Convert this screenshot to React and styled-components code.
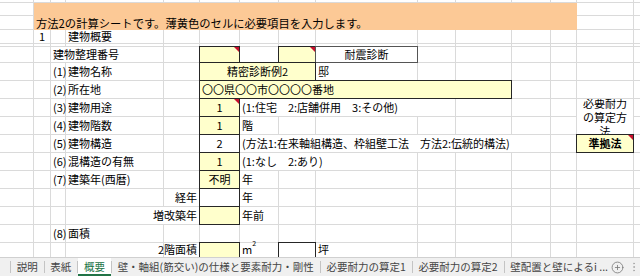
import React from "react";
import styled, { createGlobalStyle, css } from "styled-components";
import { CirclePlus, EllipsisVertical } from "lucide-react";

const GlobalStyle = createGlobalStyle`
  html, body {
    margin: 0;
    padding: 0;
    background: #ffffff;
  }
  body {
    font-family: "Noto Sans CJK JP", "Noto Sans", sans-serif;
  }
`;

// column widths (A..O) and row heights, gridline sits on the last pixel of each
const COLS = [34, 17, 15, 98, 36, 40, 39, 37, 102, 38, 56, 39, 26, 57, 40];
const ROWS = [3, 13, 14, 14, 3, 16, 18, 18, 18, 18, 18, 18, 18, 18, 18, 18, 18, 18];

const Page = styled.div`
  width: 640px;
  height: 276px;
  display: flex;
  flex-direction: column;
  overflow: hidden;
`;

const Sheet = styled.div`
  flex: 0 0 257px;
  overflow: hidden;
  display: grid;
  grid-template-columns: ${COLS.map((c) => `${c}px`).join(" ")};
  grid-template-rows: ${ROWS.map((r) => `${r}px`).join(" ")};
  font-size: 11px;
  color: #000;
`;

const GridCell = styled.div`
  grid-column: ${(p) => p.$c};
  grid-row: ${(p) => p.$r};
  border-right: 1px solid #dadada;
  border-bottom: 1px solid #dadada;
`;

const Cell = styled.div`
  grid-column: ${(p) => p.$col};
  grid-row: ${(p) => p.$row};
  position: relative;
  display: flex;
  align-items: ${(p) => p.$v || "center"};
  justify-content: ${(p) =>
    p.$align === "center" ? "center" : p.$align === "right" ? "flex-end" : "flex-start"};
  padding: 0 2px;
  white-space: nowrap;
  line-height: 13px;
  margin: 0 1px 1px 0;
  background: ${(p) => p.$fill || "transparent"};
  font-weight: ${(p) => (p.$bold ? 700 : 400)};
  ${(p) =>
    p.$box &&
    css`
      margin: -1px 0 0 -1px;
      border: 1px solid ${p.$box};
    `}
  ${(p) =>
    p.$note &&
    css`
      &::after {
        content: "";
        position: absolute;
        top: 0;
        right: 0;
        border-top: 5px solid #c8102e;
        border-left: 5px solid transparent;
      }
    `}
`;

const Title = styled(Cell)`
  align-items: flex-end;
  padding: 0 0 1px 2px;
  font-size: 11.3px;
  line-height: 12px;
  margin: 0;
  background: #fcc996;
`;

const WrapNote = styled.div`
  grid-column: 14;
  grid-row: 9 / 11;
  margin: 0 1px 1px 0;
  overflow: hidden;
  display: flex;
  align-items: center;
  justify-content: center;
  text-align: center;
  line-height: 14px;
  background: #fff;
`;

const TabBar = styled.div`
  flex: 1;
  display: flex;
  align-items: stretch;
  background: #f0f0f0;
  border-top: 1px solid #d0d0d0;
  padding-left: 10px;
  font-size: 10.5px;
  color: #444;
  white-space: nowrap;
`;

const Tab = styled.div`
  display: flex;
  align-items: center;
  padding: 0 6px 1px;
  ${(p) =>
    p.$active &&
    css`
      background: #ffffff;
      color: #217346;
      box-shadow: inset 0 -2px 0 #217346;
    `}
`;

const Sep = styled.span`
  align-self: center;
  width: 1px;
  height: 12px;
  background: #c4c4c4;
`;

const TabTools = styled.div`
  display: flex;
  align-items: center;
  gap: 4px;
  margin-left: -3px;
  color: #777;
  svg:last-child {
    color: #aaa;
  }
`;

const Sup = styled.sup`
  font-size: 7px;
  line-height: 0;
`;

const W = "#ffffff";
const Y = "#ffffcc";
const K = "#262626";

const gridCells = [];
ROWS.forEach((_, r) => {
  COLS.forEach((__, c) => {
    gridCells.push(<GridCell key={`${r}-${c}`} $r={r + 1} $c={c + 1} />);
  });
});

const tabs = [
  "説明",
  "表紙",
  "概要",
  "壁・軸組(筋交い)の仕様と要素耐力・剛性",
  "必要耐力の算定1",
  "必要耐力の算定2",
  "壁配置と壁によるi ...",
];

export default function App() {
  return (
    <Page>
      <GlobalStyle />
      <Sheet>
        {gridCells}

        <Title $col="2 / 14" $row="2 / 4">
          方法2の計算シートです。薄黄色のセルに必要項目を入力します。
        </Title>

        <Cell $col="2" $row="4" $align="center">1</Cell>
        <Cell $col="4" $row="4">建物概要</Cell>

        {/* 建物整理番号 */}
        <Cell $col="3 / 5" $row="6" $fill={W}>建物整理番号</Cell>
        <Cell $col="6" $row="6" $fill={Y} $box={K} $note />
        <Cell $col="8" $row="6" $fill={Y} $box={K} $note />
        <Cell $col="9" $row="6" $fill={W} $box="#555" $align="center">耐震診断</Cell>

        <Cell $col="3" $row="7">(1)</Cell>
        <Cell $col="4" $row="7">建物名称</Cell>
        <Cell $col="6 / 9" $row="7" $fill={Y} $box={K} $align="center">精密診断例2</Cell>
        <Cell $col="9" $row="7">邸</Cell>

        <Cell $col="3" $row="8">(2)</Cell>
        <Cell $col="4" $row="8">所在地</Cell>
        <Cell $col="6 / 12" $row="8" $fill={Y} $box={K}>〇〇県〇〇市〇〇〇〇番地</Cell>

        <Cell $col="3" $row="9">(3)</Cell>
        <Cell $col="4" $row="9">建物用途</Cell>
        <Cell $col="6" $row="9" $fill={Y} $box={K} $align="center" $note>1</Cell>
        <Cell $col="7 / 11" $row="9" $fill={W}>(1:住宅　2:店舗併用　3:その他)</Cell>

        <Cell $col="3" $row="10">(4)</Cell>
        <Cell $col="4" $row="10">建物階数</Cell>
        <Cell $col="6" $row="10" $fill={Y} $box={K} $align="center">1</Cell>
        <Cell $col="7" $row="10">階</Cell>

        <Cell $col="3" $row="11">(5)</Cell>
        <Cell $col="4" $row="11">建物構造</Cell>
        <Cell $col="6" $row="11" $fill={W} $box={K} $align="center">2</Cell>
        <Cell $col="7 / 13" $row="11" $fill={W}>
          (方法1:在来軸組構造、枠組壁工法　方法2:伝統的構法)
        </Cell>

        <Cell $col="3" $row="12">(6)</Cell>
        <Cell $col="4" $row="12">混構造の有無</Cell>
        <Cell $col="6" $row="12" $fill={Y} $box={K} $align="center">1</Cell>
        <Cell $col="7 / 10" $row="12" $fill={W}>(1:なし　2:あり)</Cell>

        <Cell $col="3" $row="13">(7)</Cell>
        <Cell $col="4" $row="13">建築年(西暦)</Cell>
        <Cell $col="6" $row="13" $fill={Y} $box={K} $align="center">不明</Cell>
        <Cell $col="7" $row="13">年</Cell>

        <Cell $col="4 / 6" $row="14" $align="right">経年</Cell>
        <Cell $col="6" $row="14" $fill={W} $box={K} />
        <Cell $col="7" $row="14">年</Cell>

        <Cell $col="4 / 6" $row="15" $align="right" $fill={W}>増改築年</Cell>
        <Cell $col="6" $row="15" $fill={Y} $box={K} />
        <Cell $col="7" $row="15">年前</Cell>

        <Cell $col="3" $row="16">(8)</Cell>
        <Cell $col="4" $row="16">面積</Cell>

        <Cell $col="4 / 6" $row="17" $align="right" $v="flex-start">2階面積</Cell>
        <Cell $col="6" $row="17" $fill={Y} $box={K} />
        <Cell $col="7" $row="17" $v="flex-start">
          m<Sup>2</Sup>
        </Cell>
        <Cell $col="8" $row="17" $fill={W} $box={K} />
        <Cell $col="9" $row="17" $v="flex-start">坪</Cell>

        <WrapNote>
          必要耐力
          <br />
          の算定方
          <br />
          法
        </WrapNote>
        <Cell $col="14" $row="11" $fill={Y} $box={K} $align="center" $bold $note>
          準拠法
        </Cell>
      </Sheet>

      <TabBar>
        <Sep />
        {tabs.map((t, i) => (
          <React.Fragment key={t}>
            <Tab $active={t === "概要"}>{t}</Tab>
            {i < tabs.length - 1 && <Sep />}
          </React.Fragment>
        ))}
        <TabTools>
          <CirclePlus size={13} strokeWidth={1.5} />
          <EllipsisVertical size={12} strokeWidth={2} />
        </TabTools>
      </TabBar>
    </Page>
  );
}
